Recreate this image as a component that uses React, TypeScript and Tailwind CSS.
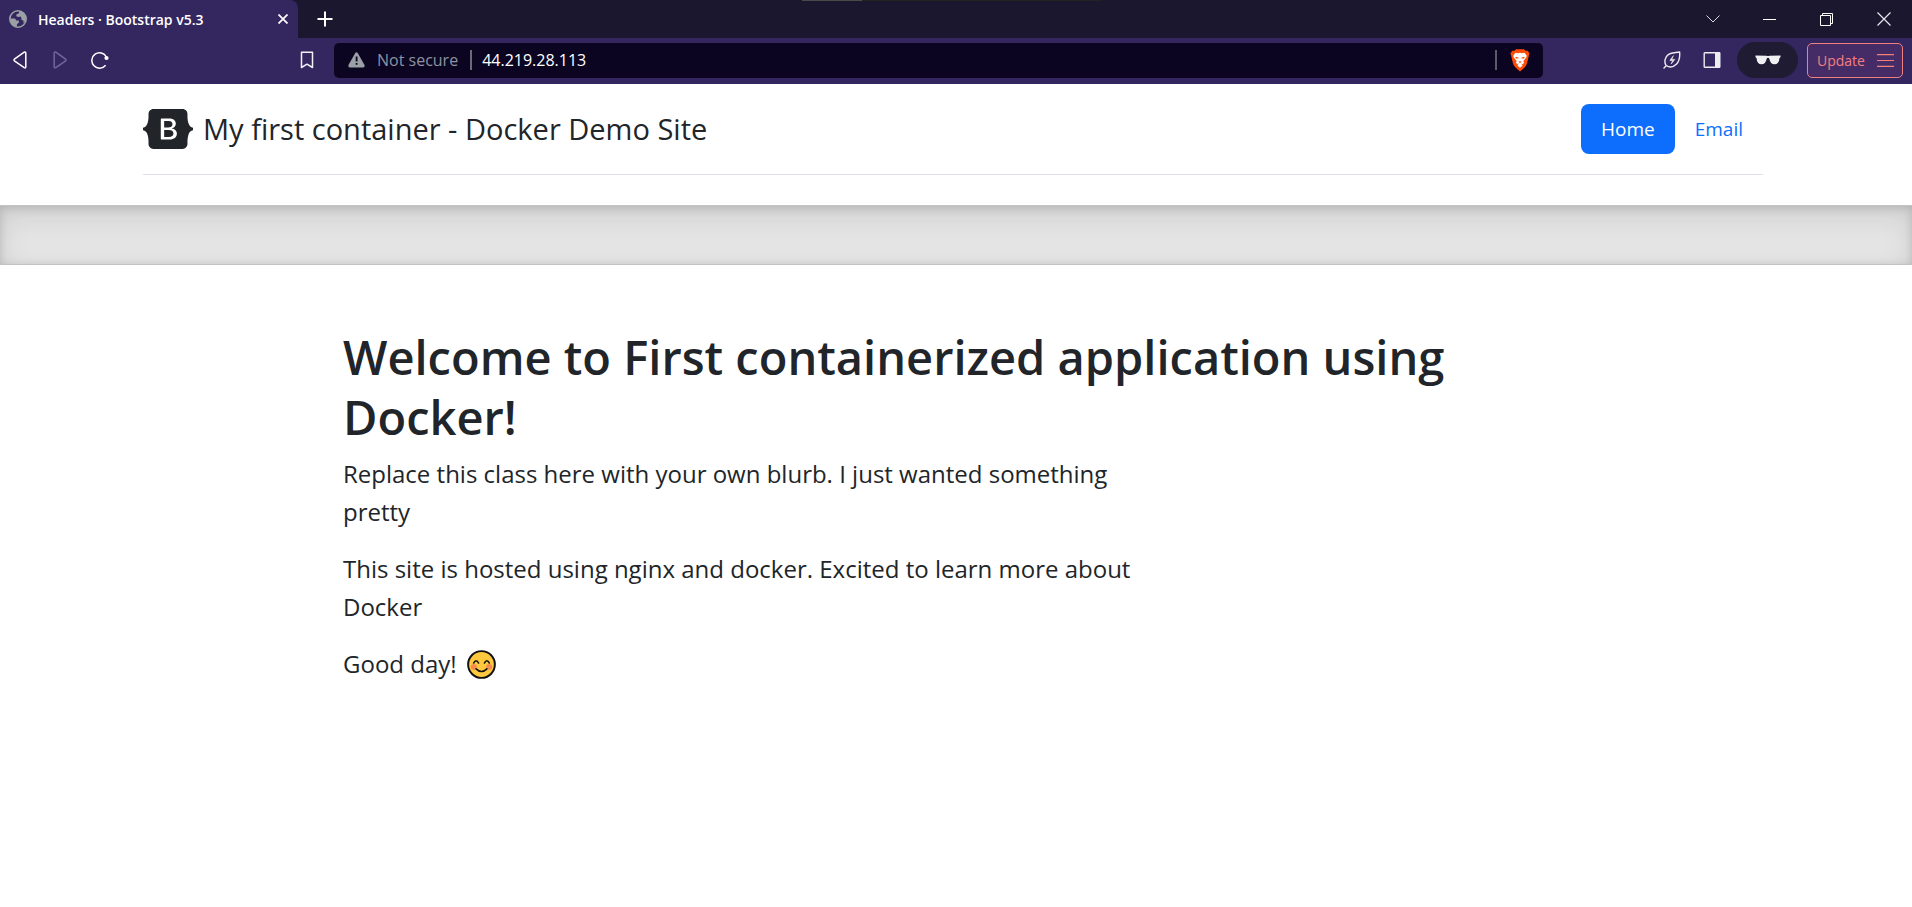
import type { ReactNode } from "react";

function IconButton({ label, className = "", children }: { label: string; className?: string; children: ReactNode }) {
  return (
    <button type="button" aria-label={label} className={`flex shrink-0 items-center justify-center ${className}`}>
      {children}
    </button>
  );
}

function GlobeIcon() {
  return (
    <svg width="18" height="18" viewBox="0 0 18 18" aria-hidden="true">
      <circle cx="9" cy="9" r="8.2" fill="none" stroke="#9aa0a6" strokeWidth="1.6" />
      <path
        d="M1 8.5 L5.2 8.5 Q7 8.8 7 10.4 L9.8 10.6 Q10.4 13.6 8 14 L7.8 17 Q1.5 16.400 1 8.500Z M10 1 L10 3 Q9.600 4 7.600 4.200 L7.200 6.200 L9.400 7 L11.600 6.600 Q12.800 8 12.400 9.800 L14.600 10.800 L14.400 13.600 Q17 12 17 8.600 Q16.400 1.800 10 1Z"
        fill="#9aa0a6"
      />
    </svg>
  );
}

function WindowTabs() {
  return (
    <div className="relative flex h-[38px] bg-[#1a172e]">
      <div className="flex w-[298px] shrink-0 items-center rounded-tr-lg bg-[#34275f] pr-2 pl-[9px]">
        <GlobeIcon />
        <span className="ml-[11px] grow font-['Open_Sans',sans-serif] text-[14px] font-semibold whitespace-nowrap text-white">
          Headers · Bootstrap v5.3
        </span>
        <IconButton label="Close tab" className="size-[14px]">
          <svg width="10" height="10" viewBox="0 0 10 10" stroke="#fff" strokeWidth="1.7" aria-hidden="true">
            <path d="M0.500 0.500 9.500 9.500M9.500 0.500 0.500 9.500" />
          </svg>
        </IconButton>
      </div>
      <IconButton label="New tab" className="w-[54px]">
        <svg width="16" height="16" viewBox="0 0 16 16" stroke="#fff" strokeWidth="2" aria-hidden="true">
          <path d="M8 0.500V15.500M0.500 8H15.500" />
        </svg>
      </IconButton>
      <div className="grow" />
      <IconButton label="Search tabs" className="w-[57px]">
        <svg width="14" height="8" viewBox="0 0 14 8" fill="none" stroke="#d6d6dc" aria-hidden="true">
          <path d="M0.500 0.500 7 7 13.500 0.500" />
        </svg>
      </IconButton>
      <IconButton label="Minimize" className="w-[57px]">
        <svg width="13" height="1" viewBox="0 0 13 1" aria-hidden="true">
          <path d="M0 0H13V1H0Z" fill="#fff" />
        </svg>
      </IconButton>
      <IconButton label="Restore" className="w-[57px]">
        <svg width="13" height="13" viewBox="0 0 13 13" fill="none" stroke="#fff" aria-hidden="true">
          <path d="M0.500 2.500H10.500V12.500H0.500ZM2.500 2.500V0.500H12.500V10.500H10.500" />
        </svg>
      </IconButton>
      <IconButton label="Close window" className="w-[57px]">
        <svg width="14" height="14" viewBox="0 0 14 14" stroke="#e8e8ec" strokeWidth="1.200" aria-hidden="true">
          <path d="M0.500 0.500 13.500 13.500M13.500 0.500 0.500 13.500" />
        </svg>
      </IconButton>
      <div className="absolute inset-x-0 top-0 flex justify-center pr-2">
        <div className="h-px w-[60px] bg-[#4a4a4a]" />
        <div className="h-px w-[240px] bg-[#222222]" />
      </div>
    </div>
  );
}

function Toolbar() {
  return (
    <div className="flex h-[46px] items-center bg-[#34275f] pr-[9px] pb-[2px] font-['Open_Sans',sans-serif]">
      <IconButton label="Back" className="w-10">
        <svg width="14" height="18" viewBox="0 0 14 18" fill="none" stroke="#fff" strokeWidth="1.500" strokeLinejoin="round" aria-hidden="true">
          <path d="M11.200 1.200Q12.800 0.500 12.800 2.200V15.800Q12.800 17.500 11.200 16.600L1.400 9.800Q0.600 9 1.400 8.200Z" />
        </svg>
      </IconButton>
      <IconButton label="Forward" className="w-10">
        <svg width="14" height="18" viewBox="0 0 14 18" fill="none" stroke="#71679a" strokeWidth="1.500" strokeLinejoin="round" aria-hidden="true">
          <path d="M2.800 1.200Q1.200 0.500 1.200 2.200V15.800Q1.200 17.500 2.800 16.600L12.600 9.800Q13.400 9 12.600 8.200Z" />
        </svg>
      </IconButton>
      <IconButton label="Reload" className="w-10">
        <svg width="18" height="18" viewBox="0 0 18 18" fill="none" stroke="#fff" strokeWidth="1.500" aria-hidden="true">
          <path d="M14.600 14.200A7.700 7.700 0 1 1 15.400 6" />
          <circle cx="15.500" cy="7" r="2.100" fill="#fff" stroke="none" />
        </svg>
      </IconButton>
      <div className="w-[167px] shrink" />
      <IconButton label="Bookmark this page" className="w-10">
        <svg width="14" height="18" viewBox="0 0 14 18" fill="none" stroke="#f2f2f5" strokeWidth="1.500" strokeLinejoin="round" aria-hidden="true">
          <path d="M1.500 1.200H12.500V16.500L7 13.200 1.500 16.500Z" />
        </svg>
      </IconButton>
      <div className="ml-[7px] flex h-[35px] grow items-center rounded-[5px] bg-[#0b0522] pr-[13px] pl-[14px]">
        <button type="button" className="flex items-center text-[16px] whitespace-nowrap text-[#8d93a0]">
          <svg width="17" height="16" viewBox="0 0 17 16" className="mr-3" aria-hidden="true">
            <path d="M7 1.400Q8.500-0.800 10 1.400L16.400 12.800Q17.200 15.400 14.800 15.500H2.200Q-0.200 15.400 0.600 12.800Z" fill="#9aa0a6" />
            <path d="M7.700 4.500H9.500V9.500H7.700ZM7.700 11H9.500V12.800H7.700Z" fill="#0b0522" />
          </svg>
          Not secure
        </button>
        <div className="mr-[10px] ml-3 h-5 w-0.5 bg-[#6c6a78]" />
        <input
          type="text"
          aria-label="Address"
          defaultValue="44.219.28.113"
          className="min-w-0 grow bg-transparent text-[16px] text-white outline-none"
        />
        <div className="mr-[13px] h-5 w-0.5 bg-[#5d5a6c]" />
        <IconButton label="Brave Shields" className="w-5">
          <svg width="20" height="23" viewBox="0 0 20 23" aria-hidden="true">
            <path d="M6 0.300H14L15.600 1.800 17.800 1.800 19.600 4.600 18.900 6.600 17 14.600Q16.200 17.600 10 22.600 3.800 17.600 3 14.600L1.100 6.600 0.400 4.600 2.200 1.800 4.400 1.800Z" fill="#fb4b04" />
            <path
              fillRule="evenodd"
              fill="#fff"
              d="M5.400 3.700 8 4.200Q10 3.500 12 4.200L14.600 3.700 16.800 6.800 16.200 8.600 13.400 12 14 14 12.600 15.200 11 14.200 12.600 16.600 10 18.800 7.400 16.600 9 14.200 7.400 15.200 6 14 6.600 12 3.800 8.600 3.200 6.800ZM5.200 7.800 6 9.400 8.600 9.600 8.400 8.600ZM14.800 7.800 14 9.400 11.400 9.600 11.600 8.600ZM8.600 12.200 9.200 13.400 10 13.900 10.800 13.400 11.400 12.200 10 12.600Z"
            />
          </svg>
        </IconButton>
      </div>
      <IconButton label="Energy saver" className="ml-[109px] w-10">
        <svg width="18" height="18" viewBox="0 0 18 18" fill="none" stroke="#ececf1" strokeWidth="1.400" strokeLinejoin="round" strokeLinecap="round" aria-hidden="true">
          <path d="M1 17 3.200 14.600C0.800 11 1.800 6 5.600 3.400 8.600 1.400 12.600 1.800 16.600 1 17 5.500 16.600 10 13.600 13 10.800 15.800 6.600 16.600 3.200 14.600" />
          <path d="M10.200 5 6.800 9.400H9.600L8.200 13 11.800 8.400H9Z" fill="#ececf1" strokeWidth="0.600" />
        </svg>
      </IconButton>
      <IconButton label="Sidebar" className="w-10">
        <svg width="18" height="18" viewBox="0 0 18 18" aria-hidden="true">
          <rect x="1.200" y="1.700" width="15.600" height="14.600" rx="0.600" fill="none" stroke="#ececf1" strokeWidth="1.400" />
          <path d="M12 1.500H17V16.500H12Z" fill="#ececf1" />
        </svg>
      </IconButton>
      <IconButton label="Private window" className="ml-[5px] h-9 w-[61px] rounded-full bg-[#1f1b33]">
        <svg width="26" height="10" viewBox="0 0 26 10" aria-hidden="true">
          <path d="M0.500 0.500 11.500 0.800Q13 1.300 14.500 0.800L25.500 0.500V2.300L24.500 3Q24 9.300 19.500 9.300 15.300 9.300 14.500 4.300L13.900 3Q13 2.400 12.100 3L11.500 4.300Q10.700 9.300 6.500 9.300 2 9.300 1.500 3L0.500 2.300Z" fill="#f0f0f3" />
        </svg>
      </IconButton>
      <button
        type="button"
        className="ml-[9px] flex h-[35px] w-[96px] shrink-0 items-center justify-between rounded-[5px] border border-[#f0807e] bg-[#452c66] pr-2 pl-[9px] text-[14px] text-[#f57f80]"
      >
        Update
        <svg width="17" height="13" viewBox="0 0 17 13" stroke="#f0807e" strokeWidth="1.200" aria-hidden="true">
          <path d="M0 0.600H17M0 6.500H17M0 12.400H17" />
        </svg>
      </button>
    </div>
  );
}

function BootstrapLogo() {
  return (
    <svg width="50" height="40" viewBox="0 0 118 94" fill="#212529" role="img" aria-label="Bootstrap">
      <path
        fillRule="evenodd"
        clipRule="evenodd"
        d="M24.509 0c-6.733 0-11.715 5.893-11.492 12.284.214 6.14-.064 14.092-2.066 20.577C8.943 39.365 5.547 43.485 0 44.014v5.972c5.547.529 8.943 4.649 10.951 11.153 2.002 6.485 2.28 14.437 2.066 20.577C12.794 88.106 17.776 94 24.51 94H93.5c6.733 0 11.714-5.893 11.491-12.284-.214-6.14.064-14.092 2.066-20.577 2.009-6.504 5.396-10.624 10.943-11.153v-5.972c-5.547-.529-8.934-4.649-10.943-11.153-2.002-6.484-2.28-14.437-2.066-20.577C105.214 5.894 100.233 0 93.5 0H24.508zM80 57.863C80 66.663 73.436 72 62.543 72H44a2 2 0 01-2-2V24a2 2 0 012-2h18.437c9.083 0 15.044 4.92 15.044 12.474 0 5.302-4.01 10.049-9.119 10.88v.277C75.317 46.394 80 51.21 80 57.863zM60.521 28.34H49.948v14.934h8.905c6.884 0 10.68-2.772 10.68-7.727 0-4.643-3.264-7.207-9.012-7.207zM49.948 49.2v16.458H60.91c7.167 0 10.964-2.876 10.964-8.281 0-5.406-3.903-8.178-11.425-8.178H49.948z"
      />
    </svg>
  );
}

function SmileIcon() {
  return (
    <svg width="29" height="29" viewBox="0 0 28 28" className="ml-1 inline-block align-[-6px]" role="img" aria-label="Smiling face">
      <circle cx="14" cy="14" r="12.900" fill="#ffc83d" stroke="#111" strokeWidth="1.900" />
      <circle cx="6.600" cy="16.500" r="2.900" fill="#f78a52" />
      <circle cx="21.400" cy="16.500" r="2.900" fill="#f78a52" />
      <path
        d="M6.400 12.600Q8.800 8.200 11.200 12.600M16.800 12.600Q19.200 8.200 21.600 12.600M8.800 18.200Q14 23.400 19.200 18.200"
        fill="none"
        stroke="#111"
        strokeWidth="1.500"
        strokeLinecap="round"
      />
    </svg>
  );
}

export default function App() {
  return (
    <div className="min-h-screen bg-white font-['Open_Sans',sans-serif] text-[#212529]">
      <div>
        <WindowTabs />
        <Toolbar />
      </div>

      <div className="px-6">
        <header className="mx-auto flex max-w-[1626px] pr-[6px]">
          <div className="mb-[30px] flex grow items-center justify-between border-b border-[#dee2e6] py-5">
            <a href="#" className="flex items-center">
              <BootstrapLogo />
              <span className="ml-[10px] text-[29px] leading-[46px]">My first container - Docker Demo Site</span>
            </a>
            <nav className="flex text-[19px] leading-[30px]">
              <a href="#" aria-current="page" className="rounded-lg bg-[#0d6efd] px-5 py-[10px] text-white">
                Home
              </a>
              <a href="#" className="rounded-lg px-5 py-[10px] text-[#0d6efd]">
                Email
              </a>
            </nav>
          </div>
        </header>
      </div>

      <div className="h-[60px] border-y border-black/15 bg-black/10 shadow-[inset_0_10px_30px_rgba(0,0,0,0.1),inset_0_2px_10px_rgba(0,0,0,0.15)]" />

      <main className="mx-auto max-w-[1226px] pt-[62px] pr-[6px]">
        <h1 className="mb-2 text-[47px] leading-[60px] font-semibold">
          Welcome to First containerized application using Docker!
        </h1>
        <div className="max-w-[800px] text-[24px] leading-[38px]">
          <p className="mb-[19px]">Replace this class here with your own blurb. I just wanted something pretty</p>
          <p className="mb-[19px]">This site is hosted using nginx and docker. Excited to learn more about Docker</p>
          <p>
            Good day! <SmileIcon />
          </p>
        </div>
      </main>
    </div>
  );
}
